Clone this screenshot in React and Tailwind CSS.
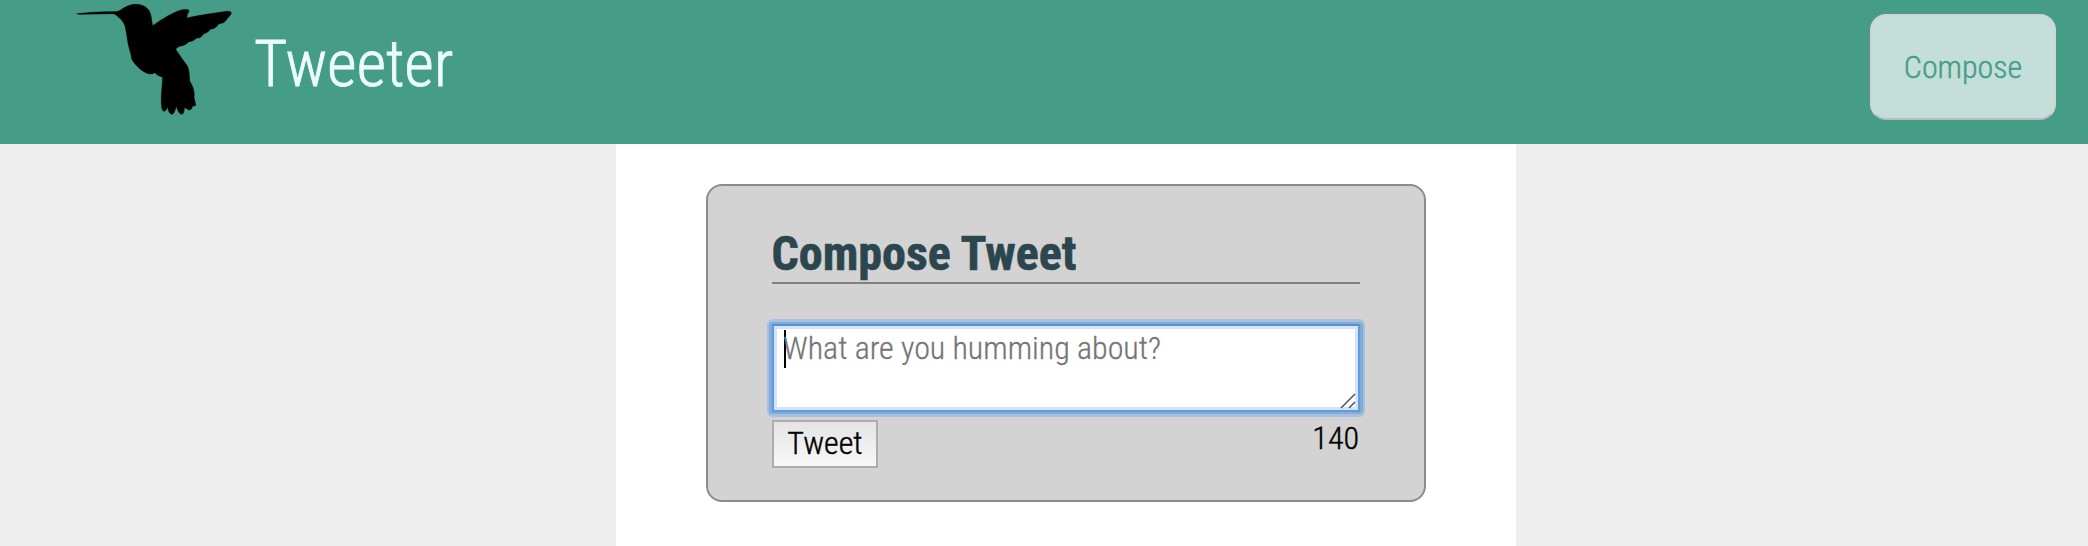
const condensed = "font-['Roboto_Condensed','Roboto',sans-serif] [font-stretch:75%]";

function Hummingbird() {
  return (
    <svg className="block h-[130px] w-[190px] shrink-0" viewBox="0 0 570 390" stroke="#000" strokeWidth="1.5" aria-hidden="true">
      <path d="M50 41 L98 37 L140 35 L160 35 C170 36 176 33 182 30 C197 19 211 13 228 13 C246 13 260 21 268 33 C275 45 274 63 278 77 C301 61 333 40 357 32 C370 28 380 28 386 30 C388 34 386 38 382 42 C383 47 380 50 379 54 C418 46 458 40 500 34 C507 33 514 35 514 39 C512 46 506 51 501 57 C498 61 497 64 492 67 C487 71 480 70 475 73 C472 79 467 83 462 85 C456 87 452 87 449 90 C444 97 438 99 430 102 C427 107 425 110 419 113 C414 114 410 113 406 117 C400 123 393 125 386 125 C381 131 373 136 366 137 C357 138 352 142 347 148 C358 163 368 181 380 194 C388 207 388 222 389 243 C397 257 402 266 403 284 L402 290 L407 315 C406 319 401 318 398 317 C396 325 393 330 388 330 C382 329 378 323 373 323 C373 333 371 343 364 343 C356 340 352 328 349 318 C346 326 344 342 335 343 C327 341 325 330 323 321 C321 325 318 333 312 334 C306 333 304 319 304 306 C303 282 307 257 308 232 C299 229 291 225 284 218 C278 223 264 223 255 217 C240 209 224 193 216 179 C213 168 213 159 209 150 C202 129 202 105 195 78 C191 65 182 56 174 50 C169 45 166 42 159 41 L110 42 L58 43 Z" />
    </svg>
  );
}

function Header() {
  return (
    <header className="flex h-36 items-start bg-[#459d88] pl-[60px] pr-8">
      <Hummingbird />
      <h1 className="ml-1 mt-[27px] text-[64px] leading-[75px] text-[#ebfcff] [-webkit-text-stroke:0.8px]">Tweeter</h1>
      <button className="ml-auto mt-3.5 flex h-[106px] w-[186px] items-center justify-center rounded-2xl border-2 border-[#d3d3d3] border-b-[#b8bcba] bg-[#c4dfd9] pb-px text-[32px] text-[#459d88] [-webkit-text-stroke:0.4px]">
        Compose
      </button>
    </header>
  );
}

function ComposeBox() {
  return (
    <section className="h-[318px] w-[720px] rounded-2xl border-2 border-[#8c8c8c] bg-[#d3d3d3] px-16 pt-10">
      <h2 className="h-[58px] border-b-2 border-[#808080] text-[48px] font-bold leading-[56px] text-[#2b464f] [-webkit-text-stroke:0.6px]">
        <span className="-ml-[0.5px]">Compose Tweet</span>
      </h2>
      <div className="-mx-[5px] mt-[35px] rounded-[6px] bg-[#a9bfda] px-0.5 pb-[3px] pt-[3px]">
        <div className="rounded-[4px] bg-[#7facdf] px-[3px] py-0.5">
          <div className="flex h-[88px] items-start border-2 border-[#659ad8] border-t-[#5b8fcb] bg-white pl-[10px] pt-1 shadow-[inset_0_0_0_3px_#d2e4fa]">
            <span className="h-[38px] w-0.5 bg-black" />
            <span className="-ml-[3px] text-[32px] leading-[37px] text-[#757575] [-webkit-text-stroke:0.3px]">
              What are you humming about?
            </span>
            <svg className="ml-auto mr-0.5 mt-[63px] h-4 w-4" viewBox="0 0 16 16" fill="none" stroke="#555" strokeWidth="1.5" aria-hidden="true">
              <path d="M1 15 15 1M9 15 15 9" />
            </svg>
          </div>
        </div>
      </div>
      <div className="mt-[3px] flex items-start justify-between text-[32px] text-black [-webkit-text-stroke:0.4px]">
        <button className="flex h-12 w-[106px] items-center justify-center border-2 border-[#adadad] bg-gradient-to-b from-[#e4e4e4] to-[#f8f8f8] pb-0.5">
          Tweet
        </button>
        <span className="mr-px leading-[37px]">140</span>
      </div>
    </section>
  );
}

export default function App() {
  return (
    <div className={`h-[546px] overflow-hidden bg-[#eeeeee] font-light ${condensed}`}>
      <Header />
      <main className="ml-[616px] flex h-[402px] w-[900px] justify-center bg-white pt-10">
        <ComposeBox />
      </main>
    </div>
  );
}
